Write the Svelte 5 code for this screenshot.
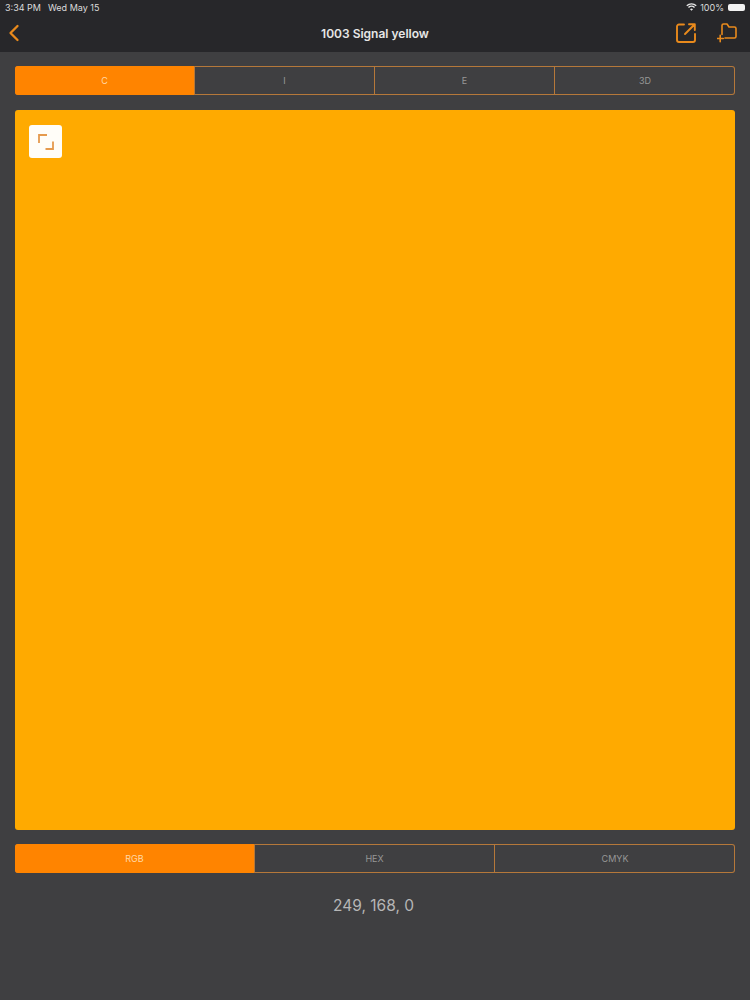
<script>
  let tabs = ['C', 'I', 'E', '3D'];
  let formats = ['RGB', 'HEX', 'CMYK'];
  let activeTab = $state(0);
  let activeFormat = $state(0);
  const values = { RGB: '249, 168, 0', HEX: '#F9A800', CMYK: '0, 33, 100, 2' };
</script>

<div class="page">
  <header>
    <div class="status">
      <span>3:34 PM</span>
      <span>Wed May 15</span>
      <span class="right">
        <svg viewBox="0 0 12 9" width="11" height="8" fill="none" stroke="#e8e8e8" stroke-width="1.5">
          <path d="M0.7 3.1 A7.6 7.6 0 0 1 11.3 3.1" />
          <path d="M2.6 5 A4.9 4.9 0 0 1 9.4 5" />
          <path d="M6 8.8 L4.3 7 A2.4 2.4 0 0 1 7.7 7 Z" fill="#e8e8e8" stroke="none" />
        </svg>
        <span>100%</span>
        <span class="battery"></span>
      </span>
    </div>
    <div class="navbar">
      <button class="back" aria-label="Back">
        <svg viewBox="0 0 12 18" width="12" height="18" fill="none" stroke="#e98a1c" stroke-width="2.3" stroke-linecap="round" stroke-linejoin="round">
          <path d="M9.5 2 L2.5 9 L9.5 16" />
        </svg>
      </button>
      <h1>1003 Signal yellow</h1>
      <div class="actions">
        <svg viewBox="0 0 20 20" width="20" height="20" fill="none" stroke="#e98a1c" stroke-width="1.9" stroke-linecap="round" stroke-linejoin="round">
          <path d="M8 1.5 H3 A2 2 0 0 0 1 3.5 V17 A2 2 0 0 0 3 19 H17 A2 2 0 0 0 19 17 V11" />
          <path d="M9 11 L18.5 1.5 M13 1.2 H18.8 V7" />
        </svg>
        <svg viewBox="0 0 20 20" width="20" height="20" fill="none" stroke="#e98a1c" stroke-width="1.6" stroke-linecap="round" stroke-linejoin="round">
          <path d="M5 11.5 V2.6 A1.6 1.6 0 0 1 6.6 1 H10 L12 4 H17.4 A1.6 1.6 0 0 1 19 5.6 V13.4 A1.6 1.6 0 0 1 17.4 15 H8" />
          <path d="M3.2 12.2 V18.8 M0 15.5 H6.4" />
        </svg>
      </div>
    </div>
  </header>

  <main>
    <div class="segments">
      {#each tabs as tab, i}
        <button class:active={activeTab === i} onclick={() => (activeTab = i)}>{tab}</button>
      {/each}
    </div>

    <div class="swatch">
      <button class="expand" aria-label="Expand">
        <svg viewBox="0 0 18 18" width="18" height="18" fill="none" stroke="#e59a4e" stroke-width="1.8">
          <path d="M2 10 V2 H10" />
          <path d="M16 8.5 V16 H8.5" />
        </svg>
      </button>
    </div>

    <div class="segments">
      {#each formats as format, i}
        <button class:active={activeFormat === i} onclick={() => (activeFormat = i)}>{format}</button>
      {/each}
    </div>

    <p class="value">{values[formats[activeFormat]]}</p>
  </main>
</div>

<style>
  :global(body) {
    margin: 0;
    background: #3f3f41;
  }
  .page {
    width: 750px;
    height: 1000px;
    display: flex;
    flex-direction: column;
    background: #3f3f41;
    font-family: Inter, "Liberation Sans", sans-serif;
    overflow: hidden;
  }
  header {
    height: 52px;
    background: #27272a;
    flex: none;
  }
  .status {
    height: 14px;
    display: flex;
    align-items: center;
    gap: 7px;
    padding: 0 5px;
    color: #dcdcdc;
    font-size: 9px;
  }
  .right {
    margin-left: auto;
    display: flex;
    align-items: center;
    gap: 3px;
  }
  .battery {
    width: 17px;
    height: 7px;
    margin-left: 1px;
    display: block;
    border-radius: 2px;
    background: #f2f2f2;
  }
  .navbar {
    height: 38px;
    display: flex;
    align-items: center;
    padding: 0 13px 0 8px;
    position: relative;
  }
  .back {
    padding: 0;
    border: 0;
    background: none;
    display: flex;
  }
  h1 {
    position: absolute;
    left: 0;
    right: 0;
    margin: 0;
    text-align: center;
    font-size: 12px;
    font-weight: 600;
    color: #e6e6e6;
  }
  .actions {
    margin-left: auto;
    display: flex;
    gap: 21px;
    z-index: 1;
  }
  main {
    flex: 1;
    padding: 14px 15px 0;
    display: flex;
    flex-direction: column;
  }
  /* ring is an inset shadow so the dividers land on the full-width thirds and quarters */
  .segments {
    height: 29px;
    display: grid;
    grid-auto-flow: column;
    grid-auto-columns: 1fr;
    flex: none;
    border-radius: 3px;
    overflow: hidden;
    box-shadow: inset 0 0 0 1px #b5783a;
  }
  .segments button {
    padding: 0;
    border: 0;
    border-right: 1px solid #b5783a;
    background: none;
    color: #979797;
    font-family: inherit;
    font-size: 9px;
  }
  .segments button:last-child {
    border-right: 0;
  }
  .segments button.active {
    background: #ff8400;
    color: #ffd9a8;
  }
  .swatch {
    height: 720px;
    margin: 15px 0 14px;
    flex: none;
    box-sizing: border-box;
    padding: 15px 14px;
    background: #ffaa00;
    border-radius: 3px;
  }
  .expand {
    width: 33px;
    height: 33px;
    padding: 0;
    border: 0;
    border-radius: 3px;
    background: #fffdf8;
    display: flex;
    align-items: center;
    justify-content: center;
  }
  .value {
    margin: 23px 3px 0 0;
    text-align: center;
    font-size: 15.5px;
    color: #b6b6b6;
  }
</style>
